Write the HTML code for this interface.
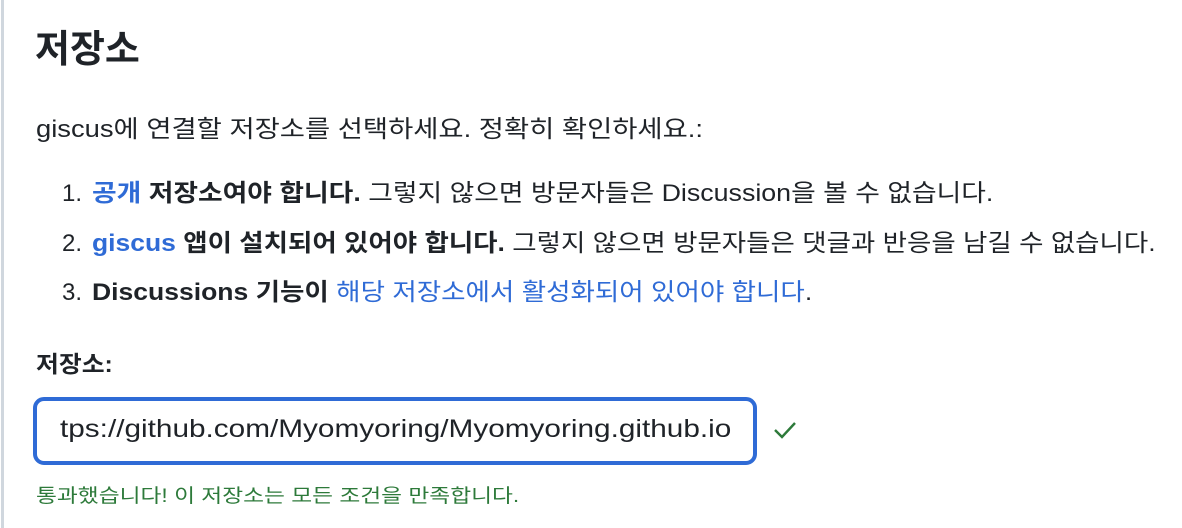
<!DOCTYPE html>
<html><head><meta charset="utf-8"><style>
body{margin:0;width:1182px;height:528px;background:#fff;overflow:hidden;font-family:"Liberation Sans","Noto Sans CJK KR",sans-serif;color:#1f2328;position:relative}
.bar{position:absolute;left:1px;top:0;width:3px;height:528px;background:#d0d7de}
.a{position:absolute;white-space:nowrap;transform-origin:0 50%}
h1{position:absolute;left:35px;top:18px;margin:0;font-size:38px;font-weight:700}
.p{font-size:24px;line-height:36px}
b{font-weight:700}
.bl{color:#2f6bd6}
.input{position:absolute;left:33px;top:397px;width:716px;height:60px;border:4px solid #2f6bd6;border-radius:11px;box-sizing:content-box}
</style></head><body>
<div class="bar"></div>
<h1>저장소</h1>
<div class="a p" style="left:36px;top:112px;transform:scaleX(1.14)">giscus에 연결할 저장소를 선택하세요. 정확히 확인하세요.:</div>
<div class="a p" style="left:62px;top:176px">1.</div>
<div class="a p" style="left:92px;top:176px;transform:scaleX(1.116)"><b class="bl">공개</b> <b>저장소여야 합니다.</b> 그렇지 않으면 방문자들은 Discussion을 볼 수 없습니다.</div>
<div class="a p" style="left:62px;top:226px">2.</div>
<div class="a p" style="left:92px;top:226px;transform:scaleX(1.103)"><b class="bl">giscus</b> <b>앱이 설치되어 있어야 합니다.</b> 그렇지 않으면 방문자들은 댓글과 반응을 남길 수 없습니다.</div>
<div class="a p" style="left:62px;top:275px">3.</div>
<div class="a p" style="left:92px;top:275px;transform:scaleX(1.105)"><b>Discussions 기능이</b> <span class="bl">해당 저장소에서 활성화되어 있어야 합니다</span>.</div>
<div class="a" style="left:36px;top:345px;font-size:23px;font-weight:700;transform:scaleX(1.08)">저장소:</div>
<div class="input"></div>
<div class="a" style="left:60px;top:415px;font-size:25px;transform:scaleX(1.19)">tps://github.com/Myomyoring/Myomyoring.github.io</div>
<svg class="a" style="left:772px;top:418px" width="26" height="24" viewBox="0 0 26 24"><path d="M3 12l7 7L23 5" fill="none" stroke="#2d7a3a" stroke-width="2.4"/></svg>
<div class="a" style="left:36px;top:481px;font-size:19px;color:#2d7a3a;transform:scaleX(1.196)">통과했습니다! 이 저장소는 모든 조건을 만족합니다.</div>
</body></html>
